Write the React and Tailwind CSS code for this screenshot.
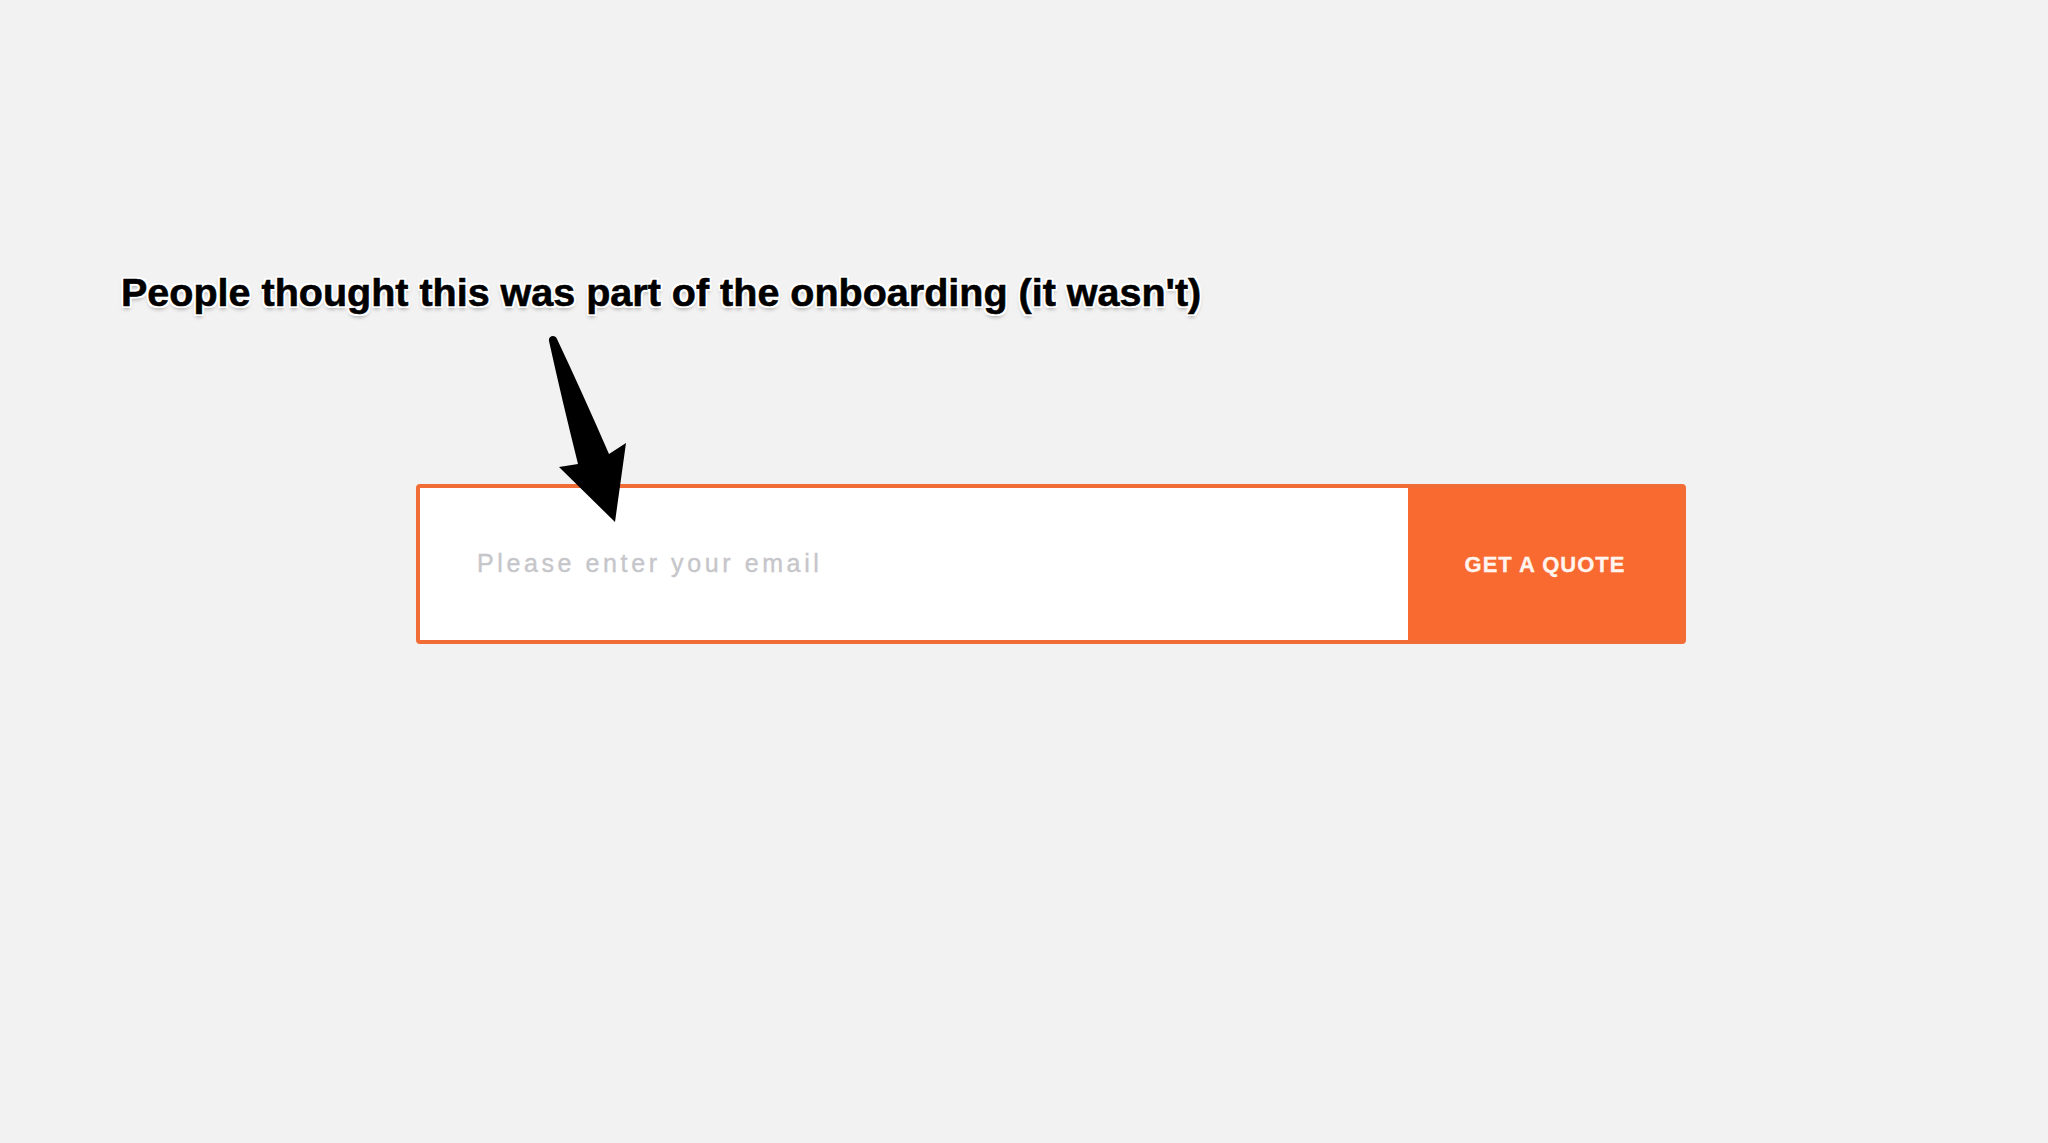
import React from 'react';

function Arrow() {
  return (
    <svg
      className="absolute left-[540px] top-[330px] z-10"
      width="100"
      height="200"
      viewBox="0 0 100 200"
    >
      <path
        d="M9 11 C8 6 15 4 17 9 Q42 62 69 124 L86 113 L75 192 L19 137 L38 134 Q22 70 9 11 Z"
        fill="#000"
      />
    </svg>
  );
}

export default function App() {
  return (
    <div className="relative min-h-screen w-full overflow-hidden bg-[#f2f2f2] font-['Liberation_Sans',Arial,sans-serif]">
      <h1 className="ml-[121px] pt-[273px] text-[39.5px] leading-[39px] font-bold text-black [-webkit-text-stroke:0.6px_#000] [text-shadow:0_0_1px_#fff,2px_0_0_#fff,-2px_0_0_#fff,0_2px_0_#fff,0_-2px_0_#fff,2px_2px_0_#fff,-2px_2px_0_#fff,2px_-2px_0_#fff,-2px_-2px_0_#fff,0_3px_4px_rgba(0,0,0,0.35)]">
        People thought this was part of the onboarding (it wasn't)
      </h1>

      <Arrow />

      <div className="ml-[416px] mt-[172px] flex h-[160px] w-[1270px] overflow-hidden rounded-[4px] border-[4px] border-[#f26c35] bg-[#f96a31]">
        <div className="flex flex-1 items-center bg-white pl-[57px]">
          <span className="text-[25px] tracking-[3.6px] text-[#c6c6ca] [-webkit-text-stroke:0.4px_#c6c6ca]">Please enter your email</span>
        </div>
        <button className="flex w-[274px] items-center justify-center bg-[#f96a31] text-[22px] font-bold tracking-[1px] text-[#fff5ee] [-webkit-text-stroke:0.3px_#fff5ee]">
          GET A QUOTE
        </button>
      </div>
    </div>
  );
}
